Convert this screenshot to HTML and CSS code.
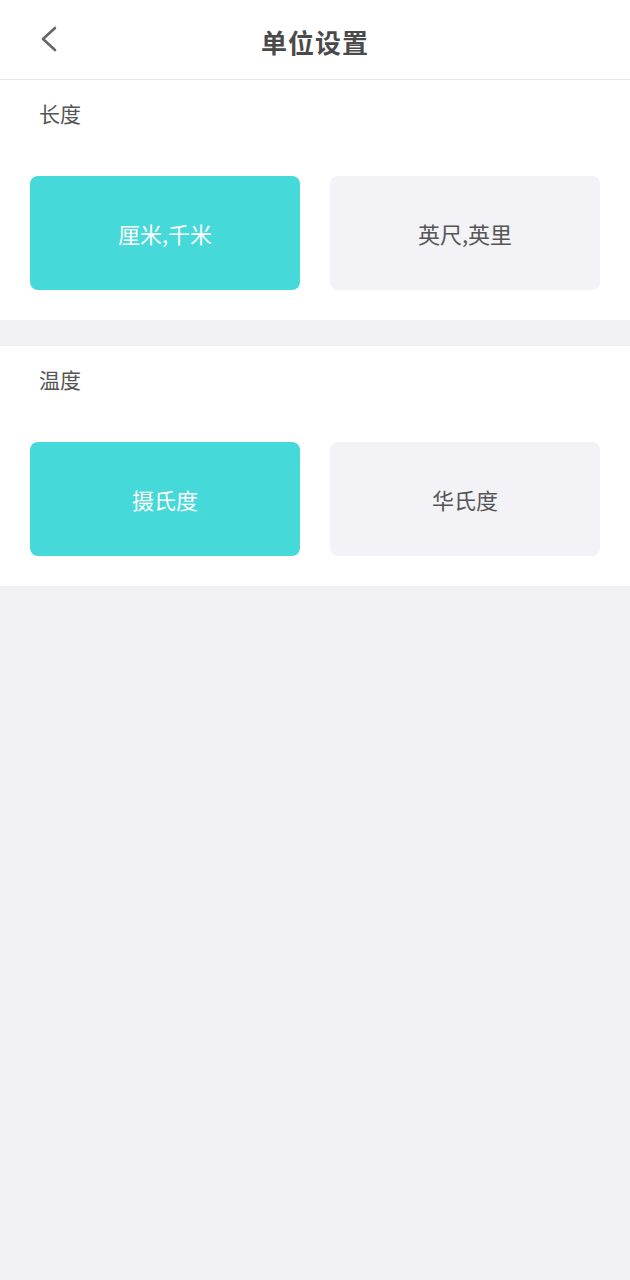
FILE: index.html
```html
<!DOCTYPE html>
<html lang="zh-CN">
<head>
  <meta charset="UTF-8">
  <meta name="viewport" content="width=device-width, initial-scale=1.0">
  <title>单位设置</title>
  <link rel="stylesheet" href="styles.css">
</head>
<body>
  <div class="header">
    <a class="back" href="#">
      <svg width="20" height="28" viewBox="0 0 20 28"><path d="M17 3 L5 14 L17 25" fill="none" stroke="#666" stroke-width="2.6" stroke-linecap="round" stroke-linejoin="round"/></svg>
    </a>
    <h1>单位设置</h1>
  </div>

  <div class="section">
    <div class="label">长度</div>
    <div class="options">
      <button class="option active">厘米,千米</button>
      <button class="option">英尺,英里</button>
    </div>
  </div>

  <div class="section">
    <div class="label">温度</div>
    <div class="options">
      <button class="option active">摄氏度</button>
      <button class="option">华氏度</button>
    </div>
  </div>
</body>
</html>
```

FILE: styles.css
```css
/* Page */
body {
  margin: 0;
  min-height: 1280px;
  background: #f1f1f6;
  font-family: "Noto Sans CJK SC", "Noto Sans", sans-serif;
  color: #555;
}

/* Top bar */
.header {
  height: 79px;
  background: #fff;
  border-bottom: 1px solid #e4e4e8;
  display: flex;
  align-items: center;
  justify-content: center;
  position: relative;
}
.back {
  position: absolute;
  left: 38px;
  top: 25px;
  display: block;
  line-height: 0;
}
.header h1 {
  margin: 0;
  font-size: 26px;
  font-weight: 700;
  color: #4a4a4a;
  letter-spacing: 1px;
  padding-top: 4px;
}

/* Unit groups */
.section {
  background: #fff;
  padding: 18px 30px 30px;
  margin-bottom: 26px;
}
.label {
  font-size: 21px;
  line-height: 30px;
  padding-left: 9px;
  color: #555;
}
.options {
  display: grid;
  grid-template-columns: 1fr 1fr;
  gap: 30px;
  margin-top: 48px;
}
.option {
  height: 114px;
  border: none;
  border-radius: 8px;
  background: #f2f2f7;
  font-family: inherit;
  font-size: 22px;
  color: #555;
  padding: 0;
}
.option.active {
  background: #45d9d9;
  color: #fff;
}
```
